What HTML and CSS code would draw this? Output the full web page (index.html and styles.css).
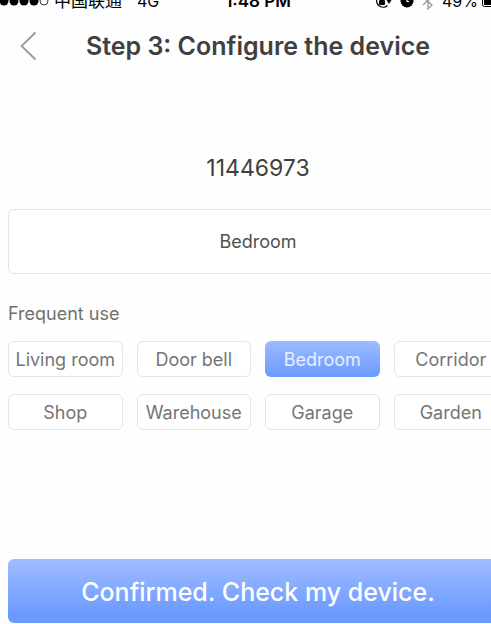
FILE: index.html
```html
<!DOCTYPE html>
<html lang="en">
<head>
    <meta charset="UTF-8">
    <meta name="viewport" content="width=device-width, initial-scale=1.0">
    <title>Step 3: Configure the device</title>
    <link rel="stylesheet" href="styles.css">
</head>
<body>
    <div class="screen">
        <div class="status-bar">
            <div class="status-left">
                <svg class="signal" width="50" height="10" viewBox="0 0 50 10">
                    <circle cx="4" cy="5" r="4.5"/>
                    <circle cx="14" cy="5" r="4.5"/>
                    <circle cx="24" cy="5" r="4.5"/>
                    <circle cx="34" cy="5" r="4.5"/>
                    <circle cx="44" cy="5" r="4" fill="none" stroke="#000" stroke-width="0.8"/>
                </svg>
                <span class="carrier" lang="zh">中国联通</span>
                <span>4G</span>
            </div>
            <span class="time">1:48 PM</span>
            <div class="status-right">
                <svg width="17" height="18" viewBox="0 0 17 18">
                    <path d="M11.5 3.2A6.500 6.500 0 1 0 12.500 13.500" fill="none" stroke="#000" stroke-width="1.2"/>
                    <path d="M11.500 8h5l-2.500 4z"/>
                    <rect x="4" y="8" width="6" height="5" rx="1"/>
                    <path d="M5 8V6.500a2 2 0 0 1 4 0V8" fill="none" stroke="#000"/>
                </svg>
                <svg width="14" height="18" viewBox="0 0 14 18">
                    <circle cx="7" cy="9" r="6.500"/>
                    <path d="M7 5v4.500h2" fill="none" stroke="#fff" stroke-width="1.2"/>
                </svg>
                <svg width="12" height="20" viewBox="0 0 12 20">
                    <path d="M1 6l9 8-4 4V2l4 4-9 8" fill="none" stroke="#999" stroke-width="1.3"/>
                </svg>
                <span>49%</span>
                <svg width="26" height="14" viewBox="0 0 26 14">
                    <rect x="0.5" y="0.5" width="22" height="12" rx="2" fill="#fff" stroke="#000"/>
                    <rect x="2" y="2" width="10" height="9"/>
                    <rect x="24" y="4" width="2" height="5"/>
                </svg>
            </div>
        </div>

        <header class="header">
            <button class="back" type="button" aria-label="Back">
                <svg width="18" height="30" viewBox="0 0 18 30">
                    <path d="M15.500 1.500L1.500 15L15.500 28.500" fill="none" stroke="#999" stroke-width="1.8"/>
                </svg>
            </button>
            <h1>Step 3: Configure the device</h1>
        </header>

        <main>
            <p class="device-id">11446973</p>
            <input class="device-name" type="text" value="Bedroom" aria-label="Device name">

            <h2>Frequent use</h2>
            <div class="options">
                <button class="option" type="button">Living room</button>
                <button class="option" type="button">Door bell</button>
                <button class="option selected" type="button">Bedroom</button>
                <button class="option" type="button">Corridor</button>
                <button class="option" type="button">Shop</button>
                <button class="option" type="button">Warehouse</button>
                <button class="option" type="button">Garage</button>
                <button class="option" type="button">Garden</button>
            </div>

            <button class="confirm" type="button">Confirmed. Check my device.</button>
        </main>
    </div>
</body>
</html>
```
FILE: styles.css
```css
* {
    box-sizing: border-box;
}
body {
    margin: 0;
    background: #fefefe;
    color: #404040;
    font-family: Inter, "Noto Sans CJK SC", sans-serif;
    overflow: hidden;
}
button,
input {
    font-family: inherit;
}
/* the phone screen runs a little past the right edge */
.screen {
    width: calc(100% + 25px);
}
.status-bar {
    display: grid;
    grid-template-columns: 1fr auto 1fr;
    align-items: center;
    height: 24px;
    margin-top: -11px;
    color: #000;
    font-size: 16px;
    line-height: 24px;
}
.status-left,
.status-right {
    display: flex;
    align-items: center;
}
.carrier {
    margin: 0 15px 0 4px;
    font-size: 17px;
}
.time {
    font-size: 17px;
    font-weight: 600;
}
.status-right {
    justify-content: flex-end;
    gap: 8px;
    padding-right: 8px;
}
.status-right span {
    margin-right: -4px;
}
.header {
    display: grid;
    grid-template-columns: 60px 1fr 60px;
    align-items: center;
    height: 66px;
}
.back {
    display: flex;
    padding: 0 0 0 20px;
    border: none;
    background: none;
    cursor: pointer;
}
h1 {
    margin: 0;
    font-size: 25px;
    font-weight: 600;
    line-height: 32px;
    text-align: center;
    white-space: nowrap;
}
main {
    padding: 0 8px;
}
.device-id {
    margin: 73px 0 25px;
    font-size: 23px;
    line-height: 32px;
    text-align: center;
}
.device-name {
    display: block;
    width: 100%;
    height: 65px;
    border: 1px solid #e4e4e4;
    border-radius: 6px;
    background: #fff;
    color: #505050;
    font-size: 18px;
    text-align: center;
    outline: none;
}
h2 {
    margin: 28px 0 15px;
    color: #707070;
    font-size: 18px;
    font-weight: 400;
    line-height: 24px;
}
.options {
    display: grid;
    grid-template-columns: repeat(4, 1fr);
    gap: 17px 14px;
}
.option {
    height: 36px;
    padding: 0;
    border: 1px solid #e4e4e4;
    border-radius: 6px;
    background: #fff;
    color: #757575;
    font-size: 18px;
    white-space: nowrap;
    cursor: pointer;
}
.option.selected {
    border: none;
    background: linear-gradient(#9dbbff, #6b9aff);
    color: #e8efff;
}
.confirm {
    width: 100%;
    height: 64px;
    margin-top: 129px;
    padding-bottom: 0;
    border: none;
    border-radius: 6px;
    background: linear-gradient(#a0bcff, #6c9bff 85%);
    color: #fff;
    font-size: 25px;
    font-weight: 500;
    cursor: pointer;
}
```
